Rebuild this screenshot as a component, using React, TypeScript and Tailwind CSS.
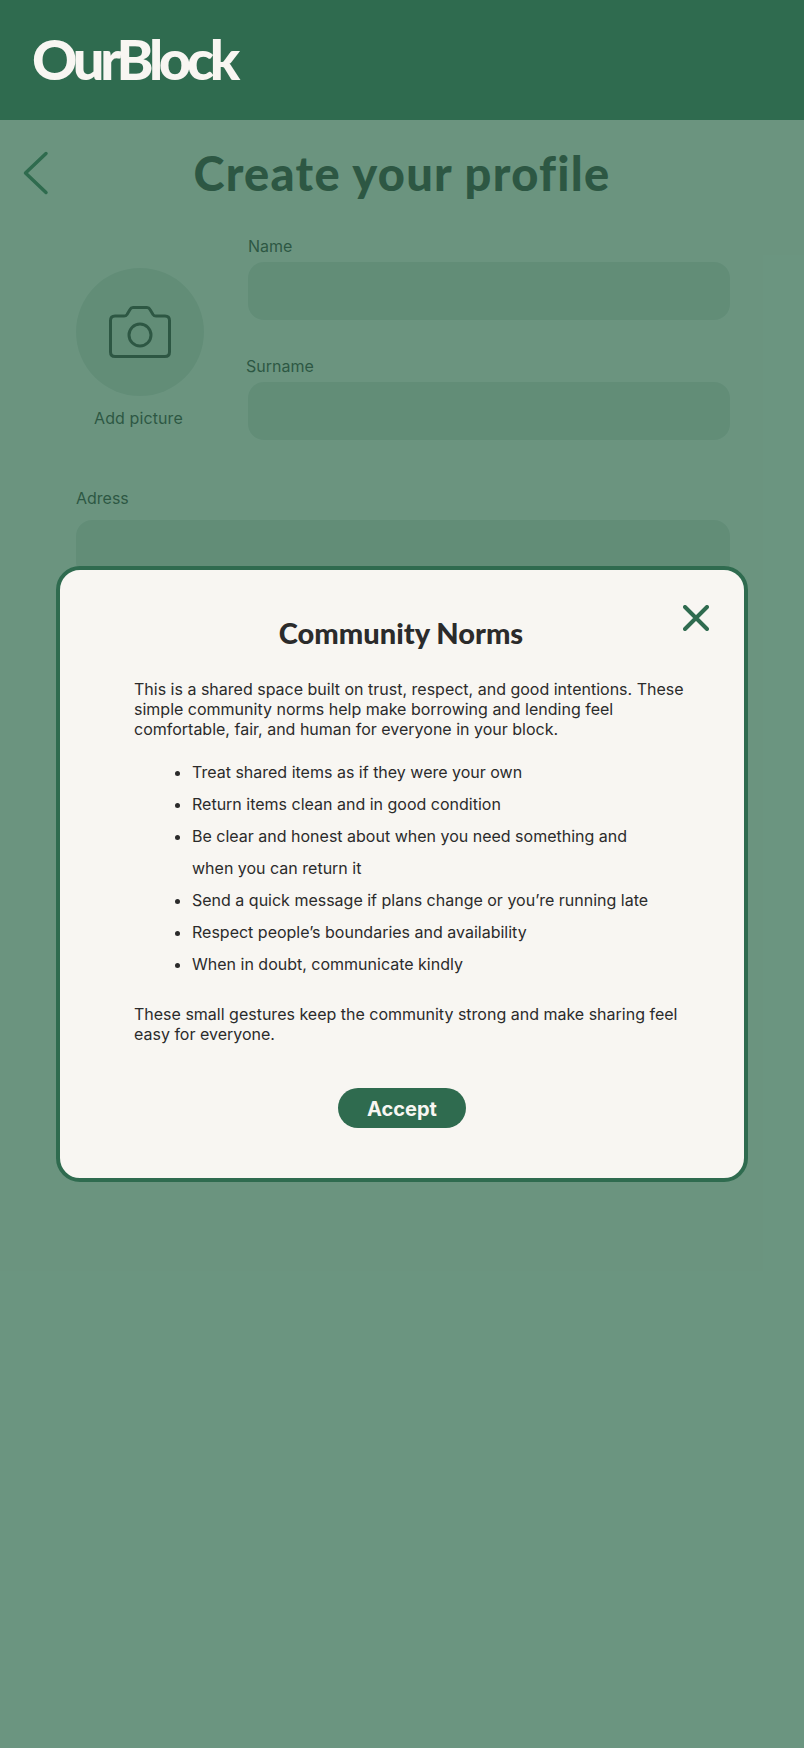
export default function App() {
  const para = "text-[16px] leading-[20px] text-[#2B2B2B]";
  const items = [
    "Treat shared items as if they were your own",
    "Return items clean and in good condition",
    "Be clear and honest about when you need something and when you can return it",
    "Send a quick message if plans change or you’re running late",
    "Respect people’s boundaries and availability",
    "When in doubt, communicate kindly",
  ];
  return (
    <div className="relative h-[1748px] w-[804px] overflow-hidden bg-[#F8F6F2] font-['Inter',sans-serif]">
      <header className="relative z-20 flex h-[120px] items-start bg-[#2F6B4F] pl-[32px] pt-[25px]">
        <span className="font-['Lato',sans-serif] text-[56px] font-black leading-[68px] tracking-[-4.3px] text-[#F8F6F2]">OurBlock</span>
      </header>

      <main>
        <div className="flex h-[106px] items-center pl-[18px] pr-[50px]">
          <svg width="32" height="48" viewBox="0 0 32 48" fill="none" className="shrink-0">
            <path d="M28 4.5 L7.5 24 L28 43.5" stroke="#2F6B4F" strokeWidth="3.5" strokeLinecap="round" strokeLinejoin="round" />
          </svg>
          <h1 className="flex-1 text-center font-['Lato',sans-serif] text-[47px] font-black leading-[56px] tracking-[1.3px] text-[#2B2B2B]">Create your profile</h1>
        </div>

        <div className="mt-[10px] flex pl-[76px] pr-[74px]">
          <div className="mt-[32px] flex w-[128px] shrink-0 flex-col items-center">
            <div className="flex h-[128px] w-[128px] items-center justify-center rounded-full bg-[#DADCD8]">
              <svg width="62" height="52" viewBox="0 0 62 52" fill="none" stroke="#2B2B2B" strokeWidth="3" strokeLinejoin="round">
                <path d="M6 10 H15 Q17 10 18 8.5 L21 3.5 Q22 1.5 24 1.5 H38 Q40 1.5 41 3.5 L44 8.5 Q45 10 47 10 H56 Q60.5 10 60.5 14.5 V46 Q60.5 50.5 56 50.5 H6 Q1.5 50.5 1.5 46 V14.5 Q1.5 10 6 10 Z" />
                <circle cx="31" cy="29" r="11" />
              </svg>
            </div>
            <span className="-ml-[3px] mt-[12px] text-[16px] leading-[20px] tracking-[0.1px] text-[#2B2B2B]">Add picture</span>
          </div>
          <div className="ml-[44px] flex-1">
            <label className="block text-[16px] leading-[20px] text-[#2B2B2B]">Name</label>
            <div className="mt-[6px] h-[58px] rounded-[16px] bg-[#DADCD8]" />
            <label className="-ml-[2px] mt-[36px] block text-[16px] leading-[20px] text-[#2B2B2B]">Surname</label>
            <div className="mt-[6px] h-[58px] rounded-[16px] bg-[#DADCD8]" />
          </div>
        </div>

        <div className="mt-[48px] pl-[76px] pr-[74px]">
          <label className="block text-[16px] leading-[20px] text-[#2B2B2B]">Adress</label>
          <div className="mt-[12px] h-[58px] rounded-[16px] bg-[#DADCD8]" />
        </div>
      </main>

      <div className="absolute inset-0 z-10 bg-[#2F6B4F]/70" />

      <div className="absolute left-[56px] top-[566px] z-30 h-[616px] w-[692px] rounded-[24px] border-4 border-[#2F6B4F] bg-[#F8F6F2] pl-[74px] pr-[60px] pt-[45px]">
        <svg width="26" height="26" viewBox="0 0 26 26" fill="none" className="absolute right-[35px] top-[35px]">
          <path d="M2 2 L24 24 M24 2 L2 24" stroke="#2F6B4F" strokeWidth="4" strokeLinecap="round" />
        </svg>
        <h2 className="-ml-[16px] text-center font-['Lato',sans-serif] text-[29px] font-black leading-[36px] text-[#2B2B2B]">Community Norms</h2>
        <p className={`mt-[28px] ${para}`}>
          This is a shared space built on trust, respect, and good intentions. These simple community norms help make borrowing and lending feel comfortable, fair, and human for everyone in your block.
        </p>
        <ul className="mt-[17px] list-disc pl-[58px] pr-[30px] text-[16px] leading-[32px] text-[#2B2B2B]">
          {items.map((t) => (
            <li key={t}>{t}</li>
          ))}
        </ul>
        <p className={`mt-[24px] ${para}`}>
          These small gestures keep the community strong and make sharing feel easy for everyone.
        </p>
        <div className="mt-[44px] flex justify-center pr-[14px]">
          <button className="h-[40px] w-[128px] rounded-full bg-[#2F6B4F] pt-[2px] text-[20px] font-bold text-[#F8F6F2]">Accept</button>
        </div>
      </div>
    </div>
  );
}
